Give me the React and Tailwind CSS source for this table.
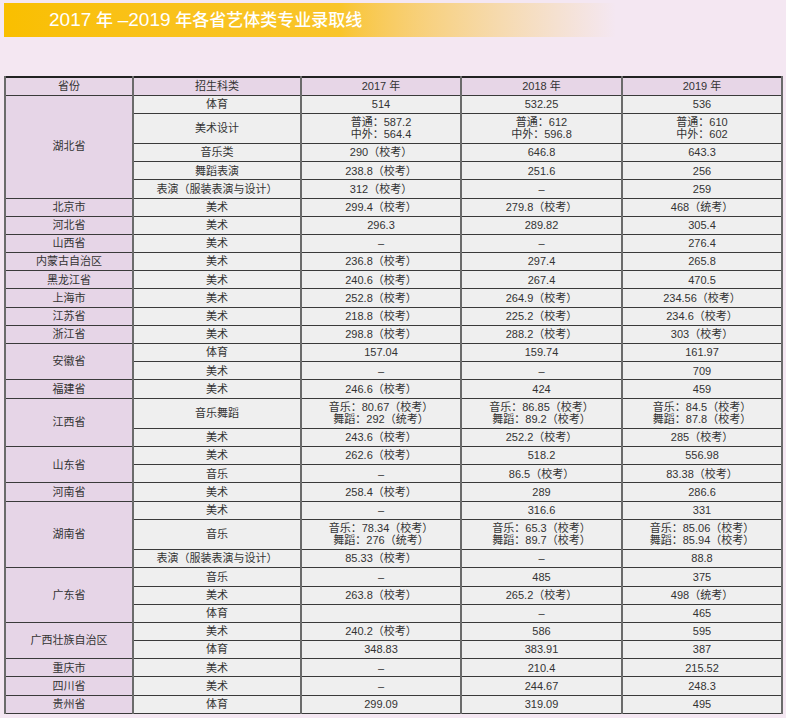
import React from 'react';

const font = { fontFamily: '"Liberation Sans", "Noto Sans CJK SC", sans-serif' };

// each group: province + its rows [科类, 2017, 2018, 2019]; arrays are two-line cells
const groups = [
  { p: '湖北省', rows: [
    ['体育', '514', '532.25', '536'],
    ['美术设计', ['普通：587.2', '中外：564.4'], ['普通：612', '中外：596.8'], ['普通：610', '中外：602']],
    ['音乐类', '290（校考）', '646.8', '643.3'],
    ['舞蹈表演', '238.8（校考）', '251.6', '256'],
    ['表演（服装表演与设计）', '312（校考）', '–', '259'],
  ] },
  { p: '北京市', rows: [['美术', '299.4（校考）', '279.8（校考）', '468（统考）']] },
  { p: '河北省', rows: [['美术', '296.3', '289.82', '305.4']] },
  { p: '山西省', rows: [['美术', '–', '–', '276.4']] },
  { p: '内蒙古自治区', rows: [['美术', '236.8（校考）', '297.4', '265.8']] },
  { p: '黑龙江省', rows: [['美术', '240.6（校考）', '267.4', '470.5']] },
  { p: '上海市', rows: [['美术', '252.8（校考）', '264.9（校考）', '234.56（校考）']] },
  { p: '江苏省', rows: [['美术', '218.8（校考）', '225.2（校考）', '234.6（校考）']] },
  { p: '浙江省', rows: [['美术', '298.8（校考）', '288.2（校考）', '303（校考）']] },
  { p: '安徽省', rows: [
    ['体育', '157.04', '159.74', '161.97'],
    ['美术', '–', '–', '709'],
  ] },
  { p: '福建省', rows: [['美术', '246.6（校考）', '424', '459']] },
  { p: '江西省', rows: [
    ['音乐舞蹈', ['音乐：80.67（校考）', '舞蹈：292（统考）'], ['音乐：86.85（校考）', '舞蹈：89.2（校考）'], ['音乐：84.5（校考）', '舞蹈：87.8（校考）']],
    ['美术', '243.6（校考）', '252.2（校考）', '285（校考）'],
  ] },
  { p: '山东省', rows: [
    ['美术', '262.6（校考）', '518.2', '556.98'],
    ['音乐', '–', '86.5（校考）', '83.38（校考）'],
  ] },
  { p: '河南省', rows: [['美术', '258.4（校考）', '289', '286.6']] },
  { p: '湖南省', rows: [
    ['美术', '–', '316.6', '331'],
    ['音乐', ['音乐：78.34（校考）', '舞蹈：276（统考）'], ['音乐：65.3（校考）', '舞蹈：89.7（校考）'], ['音乐：85.06（校考）', '舞蹈：85.94（校考）']],
    ['表演（服装表演与设计）', '85.33（校考）', '–', '88.8'],
  ] },
  { p: '广东省', rows: [
    ['音乐', '–', '485', '375'],
    ['美术', '263.8（校考）', '265.2（校考）', '498（统考）'],
    ['体育', '', '–', '465'],
  ] },
  { p: '广西壮族自治区', rows: [
    ['美术', '240.2（校考）', '586', '595'],
    ['体育', '348.83', '383.91', '387'],
  ] },
  { p: '重庆市', rows: [['美术', '–', '210.4', '215.52']] },
  { p: '四川省', rows: [['美术', '–', '244.67', '248.3']] },
  { p: '贵州省', rows: [['体育', '299.09', '319.09', '495']] },
];

const cell = 'border-y border-y-[#3a3a3a] border-x-2 border-x-[#6b6b6b] p-0 text-center align-middle';

const Value = ({ v }) =>
  Array.isArray(v) ? (
    <div className="leading-[12px]">
      <div>{v[0]}</div>
      <div>{v[1]}</div>
    </div>
  ) : (
    v
  );

export default function App() {
  return (
    <div className="min-h-screen w-full bg-[#f4e7f2] pt-[3px] pl-[4px]" style={font}>
      <div className="h-[34px] w-[612px] bg-gradient-to-r from-[#f9bf00] via-[#f9c52a] via-55% to-[#f4e7f2] pl-[45px] text-[17px] leading-[34px] font-medium text-white">
        <span className="text-[19px]">2017</span> 年 <span className="text-[19px]">–2019</span> 年各省艺体类专业录取线
      </div>

      <table className="mt-[39px] w-[777px] table-fixed border-collapse border-t-2 border-t-[#222] text-[11px] text-[#333]">
        <colgroup>
          <col className="w-[128px]" />
          <col className="w-[168px]" />
          <col className="w-[160px]" />
          <col className="w-[161px]" />
          <col className="w-[160px]" />
        </colgroup>
        <thead>
          <tr className="h-[18px] bg-[#e7d6e7]">
            <th className={`${cell} font-normal`}>省份</th>
            <th className={`${cell} font-normal`}>招生科类</th>
            <th className={`${cell} font-normal`}>2017 年</th>
            <th className={`${cell} font-normal`}>2018 年</th>
            <th className={`${cell} font-normal`}>2019 年</th>
          </tr>
        </thead>
        <tbody>
          {groups.map((g) =>
            g.rows.map((r, i) => {
              const tall = Array.isArray(r[1]);
              return (
                <tr key={g.p + i} className={tall ? 'h-[30.3px]' : 'h-[18.2px]'}>
                  {i === 0 && (
                    <td rowSpan={g.rows.length} className={`${cell} bg-[#e6d5e7]`}>
                      {g.p}
                    </td>
                  )}
                  {r.map((v, j) => (
                    <td key={j} className={`${cell} bg-[#efefef]`}>
                      <Value v={v} />
                    </td>
                  ))}
                </tr>
              );
            })
          )}
        </tbody>
      </table>
    </div>
  );
}
